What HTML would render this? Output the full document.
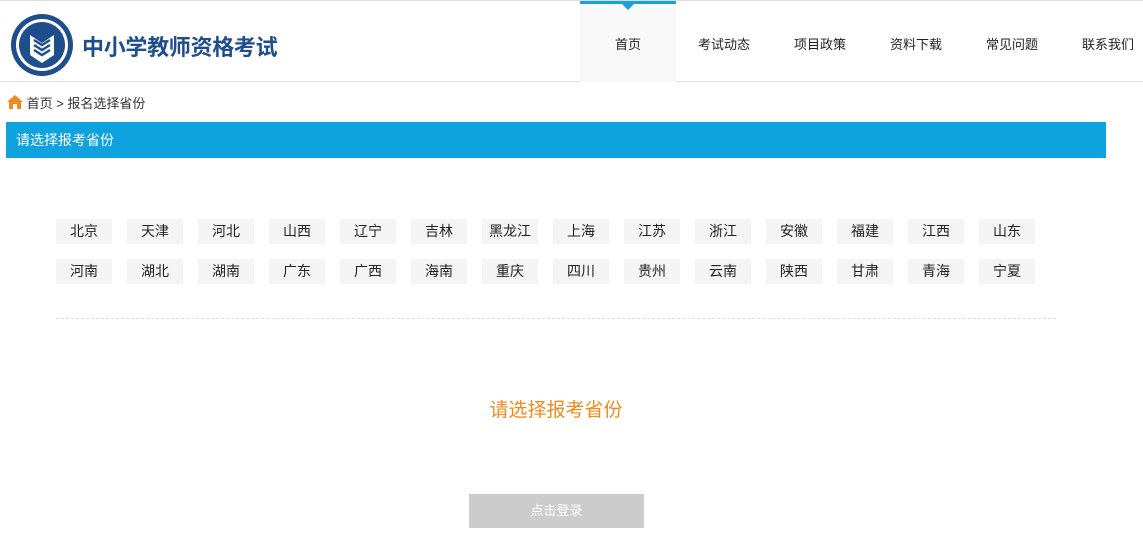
<!DOCTYPE html>
<html><head><meta charset="utf-8"><style>
*{margin:0;padding:0;box-sizing:border-box}
body{width:1143px;height:557px;background:#fff;font-family:"Liberation Sans","Microsoft YaHei","Noto Sans CJK SC",sans-serif;position:relative;overflow:hidden;color:#333}
.hd{position:absolute;left:0;top:0;width:1143px;height:82px;border-top:1px solid #ddd;border-bottom:1px solid #ddd}
.title{position:absolute;left:82px;top:29px;font-size:22px;font-weight:bold;color:#1e4e8c;letter-spacing:-0.3px}
.nav{position:absolute;top:0;left:580px;height:81px}
.nav div{position:absolute;top:0;height:81px;width:96px;text-align:center;line-height:88px;font-size:13px;color:#222}
.nav .on{background:#f8f8f8;border-top:3px solid #1aa0dc;line-height:82px}
.nav .on:after{content:"";position:absolute;left:42px;top:0;border:6px solid transparent;border-top-color:#1aa0dc}
.bc{position:absolute;left:7px;top:93px;font-size:13px;color:#333}
.bar{position:absolute;left:6px;top:122px;width:1100px;height:36px;background:#0ea2de;color:#fff;font-size:14px;line-height:36px;padding-left:10px}
.p{position:absolute;width:56px;height:25px;background:#f4f4f4;font-size:14px;text-align:center;line-height:25px;color:#222}
.dash{position:absolute;left:56px;top:318px;width:1000px;border-top:1px dashed #ddd}
.msg{position:absolute;left:0;width:1112px;top:395px;text-align:center;font-size:19px;color:#f08a1c}
.btn{position:absolute;left:469px;top:494px;width:175px;height:34px;background:#ccc;color:#fff;font-size:13px;text-align:center;line-height:34px}
</style></head><body>
<div class="hd">
<svg style="position:absolute;left:10px;top:12px" width="64" height="64" viewBox="0 0 64 64">
<circle cx="32" cy="32" r="31" fill="#1e4e8c"/><circle cx="32" cy="32" r="26" fill="#fff"/><circle cx="32" cy="32" r="23" fill="#1e4e8c"/>
<path d="M20 22 L32 30 L44 22 L44 42 L32 50 L20 42Z" fill="#fff"/>
<path d="M24 27 L32 32 L40 27 M24 32 L32 37 L40 32 M24 37 L32 42 L40 37" stroke="#1e4e8c" stroke-width="2.5" fill="none"/>
</svg>
<div class="title">中小学教师资格考试</div>
<div class="nav">
<div class="on" style="left:0">首页</div>
<div style="left:96px">考试动态</div>
<div style="left:192px">项目政策</div>
<div style="left:288px">资料下载</div>
<div style="left:384px">常见问题</div>
<div style="left:480px">联系我们</div>
</div></div>
<div class="bc"><svg width="16" height="14" viewBox="0 0 16 14" style="vertical-align:-1px"><path d="M8 0 L16 7 L14 7 L14 14 L10 14 L10 9 L6 9 L6 14 L2 14 L2 7 L0 7Z" fill="#f08a1c"/></svg> 首页 &gt; 报名选择省份</div>
<div class="bar">请选择报考省份</div>
<div class="p" style="left:56px;top:219px">北京</div><div class="p" style="left:127px;top:219px">天津</div><div class="p" style="left:198px;top:219px">河北</div><div class="p" style="left:269px;top:219px">山西</div><div class="p" style="left:340px;top:219px">辽宁</div><div class="p" style="left:411px;top:219px">吉林</div><div class="p" style="left:482px;top:219px">黑龙江</div><div class="p" style="left:553px;top:219px">上海</div><div class="p" style="left:624px;top:219px">江苏</div><div class="p" style="left:695px;top:219px">浙江</div><div class="p" style="left:766px;top:219px">安徽</div><div class="p" style="left:837px;top:219px">福建</div><div class="p" style="left:908px;top:219px">江西</div><div class="p" style="left:979px;top:219px">山东</div>
<div class="p" style="left:56px;top:259px">河南</div><div class="p" style="left:127px;top:259px">湖北</div><div class="p" style="left:198px;top:259px">湖南</div><div class="p" style="left:269px;top:259px">广东</div><div class="p" style="left:340px;top:259px">广西</div><div class="p" style="left:411px;top:259px">海南</div><div class="p" style="left:482px;top:259px">重庆</div><div class="p" style="left:553px;top:259px">四川</div><div class="p" style="left:624px;top:259px">贵州</div><div class="p" style="left:695px;top:259px">云南</div><div class="p" style="left:766px;top:259px">陕西</div><div class="p" style="left:837px;top:259px">甘肃</div><div class="p" style="left:908px;top:259px">青海</div><div class="p" style="left:979px;top:259px">宁夏</div>
<div class="dash"></div>
<div class="msg">请选择报考省份</div>
<div class="btn">点击登录</div>
</body></html>
